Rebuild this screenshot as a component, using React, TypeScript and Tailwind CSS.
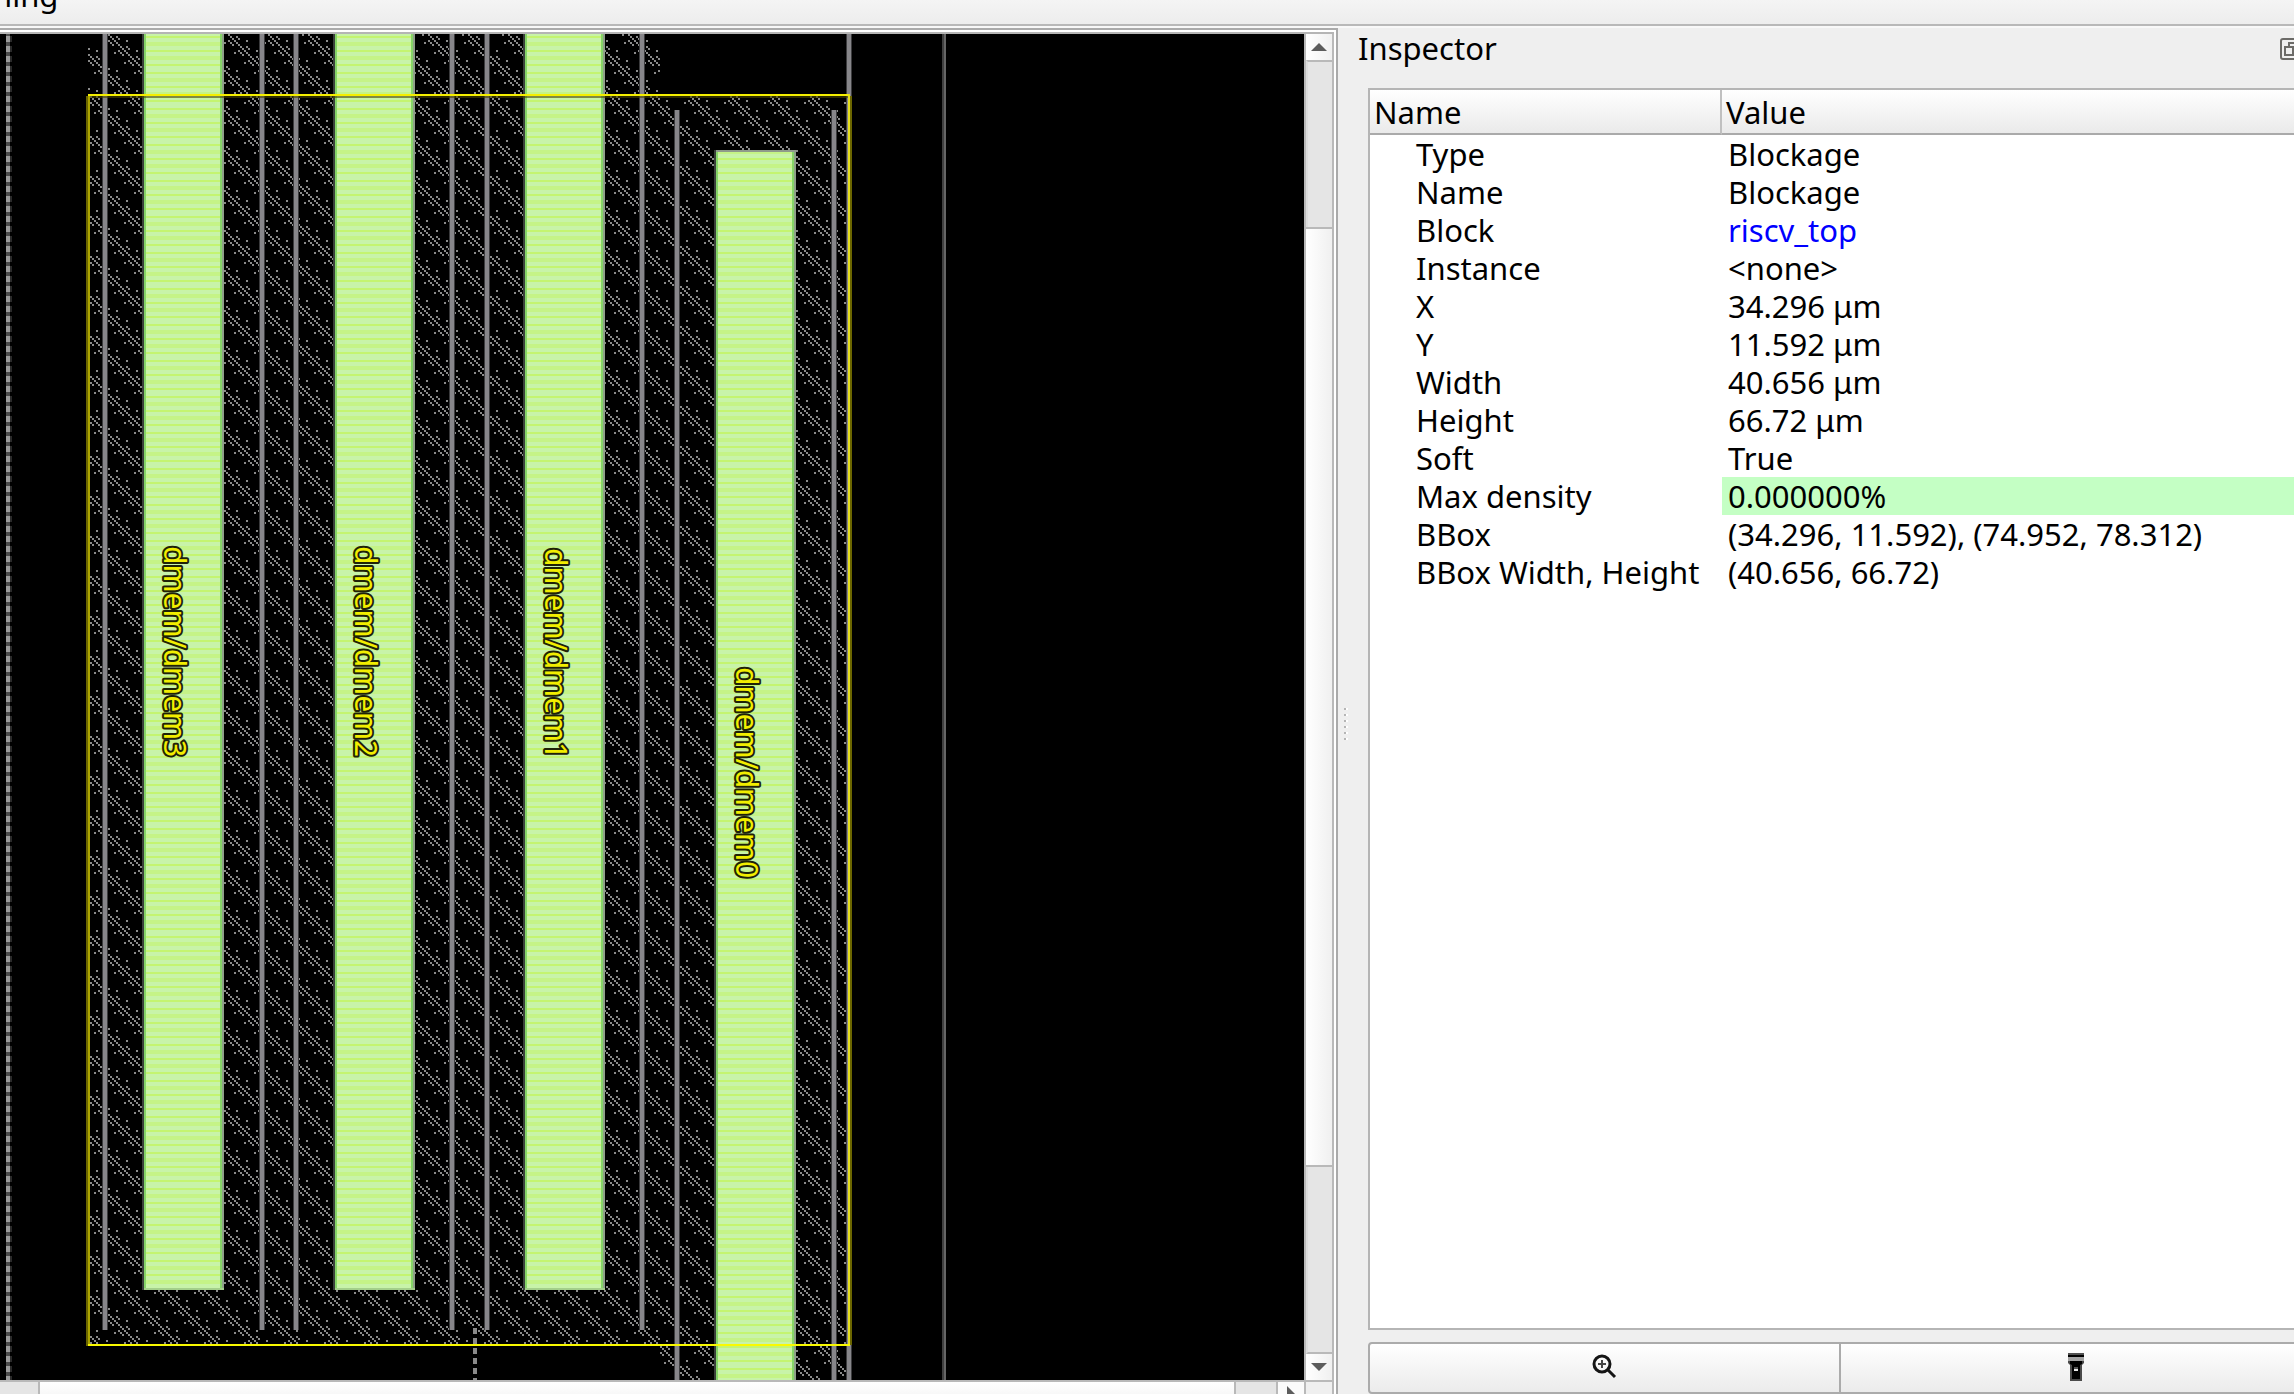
import React from "react";

type Row = { name: string; value: string; link?: boolean; editable?: boolean };

const rows: Row[] = [
  { name: "Type", value: "Blockage" },
  { name: "Name", value: "Blockage" },
  { name: "Block", value: "riscv_top", link: true },
  { name: "Instance", value: "<none>" },
  { name: "X", value: "34.296 μm" },
  { name: "Y", value: "11.592 μm" },
  { name: "Width", value: "40.656 μm" },
  { name: "Height", value: "66.72 μm" },
  { name: "Soft", value: "True" },
  { name: "Max density", value: "0.000000%", editable: true },
  { name: "BBox", value: "(34.296, 11.592), (74.952, 78.312)" },
  { name: "BBox Width, Height", value: "(40.656, 66.72)" },
];

// Dots of the blockage hatch: for each of five rows, the offsets from the diagonal.
const hatchOffsets = [
  [7, 10, 16],
  [4, 7, 10],
  [7, 10],
  [10, 13],
  [10, 13],
];
const hatchDots = Array.from({ length: 20 }, (_, y) =>
  hatchOffsets[y % 5].map((d) => [((d + y) % 20) * 2, y * 2]),
).flat();

const macros = [
  { name: "dmem/dmem3", x: 144, y: 34, bottom: 1290, labelX: 164, labelY: 546 },
  { name: "dmem/dmem2", x: 335, y: 34, bottom: 1290, labelX: 355, labelY: 546 },
  { name: "dmem/dmem1", x: 525, y: 34, bottom: 1290, labelX: 545, labelY: 548 },
  { name: "dmem/dmem0", x: 716, y: 150, bottom: 1380, labelX: 736, labelY: 667 },
];

const rails = [
  { x: 102, y: 34, bottom: 1330 },
  { x: 259, y: 34, bottom: 1330 },
  { x: 293, y: 34, bottom: 1330 },
  { x: 449, y: 34, bottom: 1330 },
  { x: 484, y: 34, bottom: 1330 },
  { x: 639, y: 34, bottom: 1330 },
  { x: 674, y: 110, bottom: 1380 },
  { x: 831, y: 110, bottom: 1380 },
  { x: 846, y: 34, bottom: 1380 },
];

function LayoutDrawing() {
  return (
    <svg
      className="absolute left-0 top-0"
      width="1304"
      height="1346"
      viewBox="0 34 1304 1346"
      role="img"
      aria-label="Chip layout"
    >
      <defs>
        <pattern id="hatch" x="24" y="10" width="40" height="40" patternUnits="userSpaceOnUse">
          {hatchDots.map(([x, y]) => (
            <rect key={`${x}-${y}`} x={x} y={y} width="2" height="2" fill="#8a8a8a" />
          ))}
        </pattern>
        <pattern id="macro" x="0" y="34" width="80" height="36" patternUnits="userSpaceOnUse">
          <rect width="80" height="36" fill="#c8f3a9" />
          <rect y="2" width="80" height="2" fill="#c4f470" />
          <rect y="8" width="80" height="4" fill="#c5f387" />
          <rect y="16" width="80" height="2" fill="#c4f470" />
          <rect y="22" width="80" height="4" fill="#c5f387" />
          <rect y="30" width="80" height="2" fill="#c4f470" />
        </pattern>
      </defs>

      <path d="M88 34H660V94H850V1380H752V1344H88Z" fill="url(#hatch)" />
      <path d="M660 1344H760V1380H660Z" fill="url(#hatch)" />

      {rails.map((r) => (
        <g key={r.x}>
          <rect x={r.x} y={r.y} width="6" height={r.bottom - r.y} fill="#3c3c3e" />
          <rect x={r.x + 1} y={r.y} width="4" height={r.bottom - r.y} fill="#87868a" />
        </g>
      ))}
      <rect x="942" y="34" width="2" height="1346" fill="#404040" />
      <rect x="944" y="34" width="2" height="1346" fill="#666666" />

      <path d="M8 34V1380" stroke="#4c4c4c" strokeWidth="4" />
      <path d="M8 36V1380" stroke="#9b9b9b" strokeWidth="4" strokeDasharray="6 4" />
      <path d="M11 36V1380" stroke="#2a2a2a" strokeWidth="2" strokeDasharray="6 4" />
      <path d="M475 1328V1380" stroke="#8a8a8a" strokeWidth="4" strokeDasharray="6 4" />

      {macros.map((m) => (
        <g key={m.name}>
          <rect x={m.x - 2} y={m.y} width="2" height={m.bottom - m.y} fill="#3a3f3a" />
          <rect x={m.x} y={m.y} width="80" height={m.bottom - m.y} fill="#8fa089" />
          <rect x={m.x} y={m.y} width="78" height={m.bottom - m.y} fill="#86d468" />
          <rect x={m.x + 2} y={m.y} width="74" height={m.bottom - m.y} fill="url(#macro)" />
        </g>
      ))}
      <rect x="716" y="150" width="80" height="2" fill="#8f9a8b" />
      {[144, 335, 525].map((x) => (
        <rect key={x} x={x} y="1288" width="80" height="2" fill="#a4cf8a" />
      ))}

      <path d="M87 96V1346" stroke="#6b6600" strokeWidth="2" />
      <path d="M89 96V1345" stroke="#aca500" strokeWidth="2" />
      <path d="M851 96V1345" stroke="#6b6600" strokeWidth="2" />
      <path d="M90 97H848" stroke="#4a4600" strokeWidth="2" strokeOpacity="0.6" />
      <path d="M88 95H850" stroke="#f4ee00" strokeWidth="2" />
      <path d="M849 94V1346" stroke="#e4de1c" strokeWidth="2" />
      <path d="M88 1345H850" stroke="#f9f900" strokeWidth="2" />

      {macros.map((m) => (
        <text
          key={m.name}
          transform={`translate(${m.labelX} ${m.labelY}) rotate(90)`}
          className="font-['Noto_Sans',sans-serif] text-[30px]"
          fill="#f2ee00"
          stroke="#1f2208"
          strokeWidth="4"
          strokeLinejoin="round"
          paintOrder="stroke"
        >
          {m.name}
        </text>
      ))}
    </svg>
  );
}

function Arrow({ points, w, h }: { points: string; w: number; h: number }) {
  return (
    <svg width={w} height={h} viewBox={`0 0 ${w} ${h}`} fill="#5c5c5c">
      <polygon points={points} />
    </svg>
  );
}

function VerticalScrollbar() {
  const button =
    "flex h-[26px] shrink-0 items-center justify-center bg-linear-to-r from-white to-[#f0f0f0]";
  return (
    <div className="flex w-[30px] shrink-0 flex-col border-x-2 border-[#b9b9b9]">
      <button className={button} aria-label="Scroll up">
        <Arrow w={16} h={8} points="8,0 16,8 0,8" />
      </button>
      <div className="flex-[166] border-l-2 border-t-2 border-l-[#dcdcdc] border-t-[#b9b9b9] bg-[#e5e5e5]" />
      <div className="flex-[938] border-y-2 border-[#b9b9b9] bg-linear-to-r from-white to-[#f0f0f0]" />
      <div className="flex-[186] border-b-2 border-l-2 border-b-[#b9b9b9] border-l-[#dcdcdc] bg-[#e5e5e5]" />
      <button className={button} aria-label="Scroll down">
        <Arrow w={16} h={8} points="0,0 16,0 8,8" />
      </button>
    </div>
  );
}

function HorizontalScrollbar() {
  return (
    <div className="flex h-[14px] shrink-0 overflow-hidden border-t-2 border-[#b9b9b9] bg-[#efefef]">
      <div className="w-[38px] bg-[#e5e5e5]" />
      <div className="flex-1 border-x-2 border-[#b9b9b9] bg-linear-to-b from-white to-[#f8f8f8]" />
      <div className="w-10 bg-[#e5e5e5]" />
      <button
        className="flex w-[30px] items-start justify-center border-x-2 border-[#b9b9b9] bg-[#fbfbfb] pt-1"
        aria-label="Scroll right"
      >
        <Arrow w={8} h={16} points="0,0 8,8 0,16" />
      </button>
      <div className="w-7 border-r-2 border-[#b9b9b9]" />
    </div>
  );
}

function FloatIcon() {
  return (
    <svg width="22" height="22" viewBox="0 0 22 22" fill="none" stroke="#6c6b68" strokeWidth="2">
      <rect x="1" y="1" width="20" height="20" rx="2" />
      <rect x="5" y="9" width="8" height="8" />
      <path d="M9 8V5H17V13H14" />
    </svg>
  );
}

function ZoomIcon() {
  return (
    <svg width="26" height="26" viewBox="0 0 26 26" fill="none" stroke="#151515">
      <circle cx="10" cy="10" r="8" strokeWidth="3" />
      <path d="M10 6V14M6 10H14" strokeWidth="2" stroke="#444444" />
      <path d="M16 16L23 23" strokeWidth="3" />
    </svg>
  );
}

function FlashlightIcon() {
  return (
    <svg width="16" height="28" viewBox="0 0 16 28">
      <rect width="16" height="2" fill="#505050" />
      <rect y="2" width="16" height="2" fill="#000" />
      <rect y="4" width="16" height="4" fill="#a3a3a3" />
      <path d="M0 8H16V10L14 12V28H2V12L0 10Z" fill="#4a4a4a" />
      <path d="M2 8H14V11L12 12V26H4V12L2 11Z" fill="#000" />
      <rect x="6" y="14" width="4" height="2" fill="#555" />
      <rect x="6" y="16" width="4" height="2" fill="#e8e8e8" />
    </svg>
  );
}

function Inspector() {
  const action =
    "flex flex-1 items-center justify-center border-2 border-[#ababab] bg-linear-to-b from-white to-[#ebebeb] pb-[2px]";
  return (
    <section className="flex min-w-0 flex-col overflow-hidden bg-[#efefef]">
      <div className="flex h-[60px] shrink-0 items-start pl-5">
        <h2 className="leading-[40px]">Inspector</h2>
        <button className="-mr-2 ml-auto mt-[10px] shrink-0" aria-label="Float panel">
          <FloatIcon />
        </button>
      </div>
      <div className="flex min-h-0 flex-1">
        <div className="flex w-[30px] shrink-0 flex-col items-start justify-center gap-1 pb-[34px] pl-[6px]">
          {[0, 1, 2, 3, 4, 5].map((i) => (
            <span key={i} className="block h-[2px] w-1 border-l-2 border-[#b5b5b5] bg-white" />
          ))}
        </div>
        <div className="-mr-[18px] flex min-w-0 flex-1 flex-col">
          <div className="min-h-0 flex-1 border-2 border-[#b5b5b5] bg-white">
            <table className="w-full table-fixed border-separate border-spacing-0 text-left">
              <thead>
                <tr className="h-[45px] bg-linear-to-b from-white to-[#e9e9e9]">
                  <th className="w-[352px] border-b-2 border-r-2 border-b-[#aaaaaa] border-r-[#c0c0c0] p-0 pl-1 font-normal">
                    Name
                  </th>
                  <th className="border-b-2 border-[#aaaaaa] p-0 pl-1 font-normal">Value</th>
                </tr>
              </thead>
              <tbody>
                {rows.map((r) => (
                  <tr key={r.name} className="h-[38px]">
                    <td className="whitespace-nowrap p-0 pl-[46px]">{r.name}</td>
                    <td className={r.editable ? "bg-[#c4ffc4] p-0 pl-[6px]" : "p-0 pl-[6px]"}>
                      {r.link ? (
                        <a href="#riscv_top" className="text-[#0000ff]">
                          {r.value}
                        </a>
                      ) : (
                        r.value
                      )}
                    </td>
                  </tr>
                ))}
              </tbody>
            </table>
          </div>
          <div className="mt-3 flex h-[52px] shrink-0">
            <button className={`${action} rounded-l-[4px]`} aria-label="Zoom to">
              <ZoomIcon />
            </button>
            <button className={`${action} -ml-[2px] rounded-r-[4px]`} aria-label="Highlight">
              <FlashlightIcon />
            </button>
          </div>
        </div>
      </div>
    </section>
  );
}

export default function App() {
  return (
    <div className="flex h-screen flex-col overflow-hidden bg-[#efefef] font-['Noto_Sans',sans-serif] text-[31px] leading-[38px] text-black">
      <header className="h-[26px] shrink-0 overflow-hidden border-b-2 border-[#b8b8b8] bg-linear-to-b from-[#f4f4f4] to-[#ededed]">
        <div className="-ml-[7px] -mt-6">ning</div>
      </header>
      <div className="h-[2px] shrink-0 bg-[#f8f8f8]" />
      <main className="grid min-h-0 flex-1 grid-cols-[1338fr_956fr] grid-rows-1">
        <div className="flex min-w-0 flex-col border-r-2 border-t-2 border-[#aaaaaa] bg-white pr-[2px] pt-[2px]">
          <div className="flex min-h-0 flex-1 flex-col border-t-2 border-[#b5b5b5]">
            <div className="flex min-h-0 flex-1">
              <div className="relative min-w-0 flex-1 overflow-hidden bg-black">
                <LayoutDrawing />
              </div>
              <VerticalScrollbar />
            </div>
            <HorizontalScrollbar />
          </div>
        </div>
        <Inspector />
      </main>
    </div>
  );
}
